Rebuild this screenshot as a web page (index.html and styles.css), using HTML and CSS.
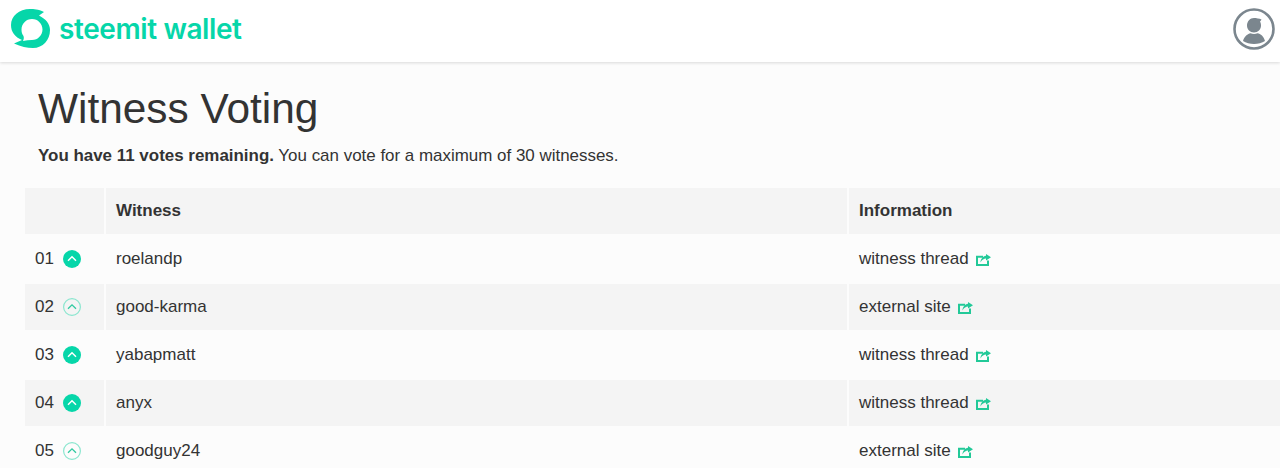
FILE: index.html
```html
<!DOCTYPE html>
<html lang="en">
<head>
    <meta charset="UTF-8">
    <title>Witness Voting - steemit wallet</title>
    <link rel="stylesheet" href="styles.css">
</head>
<body>
    <header class="topbar">
        <a class="brand" href="#">
            <svg class="brand-mark" viewBox="0 0 40 40" width="40" height="40">
                <path fill="#06d6a9" fill-rule="evenodd" d="M33 3 C27 0 23 0 19 0 C8 0 0 7 0 16 C0 23 4 28 11 31 L3 34.500 C10 37.500 16 39 22 39 C32 39 39 31 39 21 C39 15 35 10 28 6.500 Z M21 10 C27 10 31.500 15 31.500 20.500 C31.500 26 27 31 21 31 C18 31 15 31.500 12 32 C13 30 13 28.500 12.500 27 C11 25 10.500 23 10.500 20.500 C10.500 15 15 10 21 10 Z"/>
            </svg>
            <span class="brand-name">steemit wallet</span>
        </a>
        <a class="user-btn" href="#" aria-label="Account">
            <svg viewBox="0 0 42 42" width="42" height="42">
                <circle cx="21" cy="21" r="19.500" fill="none" stroke="#7b868e" stroke-width="2.600"/>
                <path fill="#7b868e" d="M21 10 C23 10 26.500 10.500 28.500 11.500 C28 12.500 27.500 13 27 13.500 C27.800 15 28 16 28 17.500 C28 21.500 25 24.500 21 24.500 C17 24.500 14 21.500 14 17.500 C14 13.500 17 10 21 10 Z"/>
                <path fill="#7b868e" d="M10 33 C11 28.500 15 25.500 17.500 25.200 C19.500 26.200 22.500 26.200 24.500 25.200 C27.500 25.500 31 28.500 32 33 C29 35 25 36 21 36 C17 36 13 35 10 33 Z"/>
            </svg>
        </a>
    </header>

    <main class="content">
        <h1>Witness Voting</h1>
        <p class="intro"><strong>You have 11 votes remaining.</strong> You can vote for a maximum of 30 witnesses.</p>

        <table class="witnesses">
            <thead>
                <tr>
                    <th class="col-rank"></th>
                    <th class="col-name">Witness</th>
                    <th>Information</th>
                </tr>
            </thead>
            <tbody>
                <tr>
                    <td>
                        <div class="rank">01
                            <svg class="vote on" viewBox="0 0 18 18" width="18" height="18"><circle cx="9" cy="9" r="9"/><path d="M5 10.700 L9 6.800 L13 10.700"/></svg>
                        </div>
                    </td>
                    <td>roelandp</td>
                    <td>witness thread <svg class="ext" viewBox="0 0 15 12" width="15" height="12"><path class="box" d="M7 2.700 H1 V11 H12 V6.500"/><path class="fill" d="M10 0 L15 3.200 L10 6.500 V4.500 C8 4.500 6 5.500 4.500 8.500 C4.500 5 7 2 10 1.700 Z"/></svg></td>
                </tr>
                <tr>
                    <td>
                        <div class="rank">02
                            <svg class="vote" viewBox="0 0 18 18" width="18" height="18"><circle cx="9" cy="9" r="8.400"/><path d="M5 10.700 L9 6.800 L13 10.700"/></svg>
                        </div>
                    </td>
                    <td>good-karma</td>
                    <td>external site <svg class="ext" viewBox="0 0 15 12" width="15" height="12"><path class="box" d="M7 2.700 H1 V11 H12 V6.500"/><path class="fill" d="M10 0 L15 3.200 L10 6.500 V4.500 C8 4.500 6 5.500 4.500 8.500 C4.500 5 7 2 10 1.700 Z"/></svg></td>
                </tr>
                <tr>
                    <td>
                        <div class="rank">03
                            <svg class="vote on" viewBox="0 0 18 18" width="18" height="18"><circle cx="9" cy="9" r="9"/><path d="M5 10.700 L9 6.800 L13 10.700"/></svg>
                        </div>
                    </td>
                    <td>yabapmatt</td>
                    <td>witness thread <svg class="ext" viewBox="0 0 15 12" width="15" height="12"><path class="box" d="M7 2.700 H1 V11 H12 V6.500"/><path class="fill" d="M10 0 L15 3.200 L10 6.500 V4.500 C8 4.500 6 5.500 4.500 8.500 C4.500 5 7 2 10 1.700 Z"/></svg></td>
                </tr>
                <tr>
                    <td>
                        <div class="rank">04
                            <svg class="vote on" viewBox="0 0 18 18" width="18" height="18"><circle cx="9" cy="9" r="9"/><path d="M5 10.700 L9 6.800 L13 10.700"/></svg>
                        </div>
                    </td>
                    <td>anyx</td>
                    <td>witness thread <svg class="ext" viewBox="0 0 15 12" width="15" height="12"><path class="box" d="M7 2.700 H1 V11 H12 V6.500"/><path class="fill" d="M10 0 L15 3.200 L10 6.500 V4.500 C8 4.500 6 5.500 4.500 8.500 C4.500 5 7 2 10 1.700 Z"/></svg></td>
                </tr>
                <tr>
                    <td>
                        <div class="rank">05
                            <svg class="vote" viewBox="0 0 18 18" width="18" height="18"><circle cx="9" cy="9" r="8.400"/><path d="M5 10.700 L9 6.800 L13 10.700"/></svg>
                        </div>
                    </td>
                    <td>goodguy24</td>
                    <td>external site <svg class="ext" viewBox="0 0 15 12" width="15" height="12"><path class="box" d="M7 2.700 H1 V11 H12 V6.500"/><path class="fill" d="M10 0 L15 3.200 L10 6.500 V4.500 C8 4.500 6 5.500 4.500 8.500 C4.500 5 7 2 10 1.700 Z"/></svg></td>
                </tr>
            </tbody>
        </table>
    </main>
</body>
</html>
```

FILE: styles.css
```css
html, body {
    height: 468px;
    overflow: hidden;
}
body {
    margin: 0;
    background-color: #fcfcfc;
    color: #333;
    font-family: "Liberation Sans", Arial, sans-serif;
    font-size: 17px;
}
.topbar {
    height: 62px;
    box-sizing: border-box;
    display: flex;
    align-items: center;
    justify-content: space-between;
    padding: 0 5px 5px 11px;
    background-color: #fff;
    box-shadow: 0 1px 3px rgba(0, 0, 0, 0.14);
}
.brand {
    display: flex;
    align-items: center;
    gap: 8px;
    text-decoration: none;
}
.brand-name {
    color: #06d6a9;
    font-family: Inter, sans-serif;
    font-size: 28px;
    font-weight: 600;
    letter-spacing: -0.4px;
}
.user-btn {
    display: flex;
}
.content {
    padding: 0 0 0 25px;
}
h1 {
    margin: 24px 0 0 13px;
    font-size: 42.400px;
    font-weight: 400;
    line-height: 46px;
}
.intro {
    margin: 12px 0 0 13px;
    font-size: 16.940px;
    line-height: 24px;
}
.witnesses {
    width: 1255px;
    margin-top: 18px;
    border-collapse: separate;
    border-spacing: 0 2px;
    table-layout: fixed;
}
th, td {
    height: 46px;
    box-sizing: border-box;
    padding: 0 10px;
    text-align: left;
    border-left: 2px solid #fcfcfc;
}
th:first-child, td:first-child {
    border-left: 0;
}
th {
    background-color: #f4f4f4;
    font-weight: 700;
}
tbody tr:nth-child(even) td {
    background-color: #f4f4f4;
}
.col-rank {
    width: 79px;
}
.col-name {
    width: 743px;
}
.rank {
    display: flex;
    align-items: center;
    gap: 9.500px;
}
.vote circle {
    fill: none;
    stroke: #8be6cf;
    stroke-width: 1.200;
}
.vote path {
    fill: none;
    stroke: #2fc9a0;
    stroke-width: 1.300;
}
.vote.on circle {
    fill: #06d6a9;
    stroke: none;
}
.vote.on path {
    stroke: #fff;
    stroke-width: 1.500;
}
.ext {
    margin-left: 3px;
    vertical-align: -2px;
}
.ext .box {
    fill: none;
    stroke: #22c998;
    stroke-width: 2;
}
.ext .fill {
    fill: #22c998;
}
```
